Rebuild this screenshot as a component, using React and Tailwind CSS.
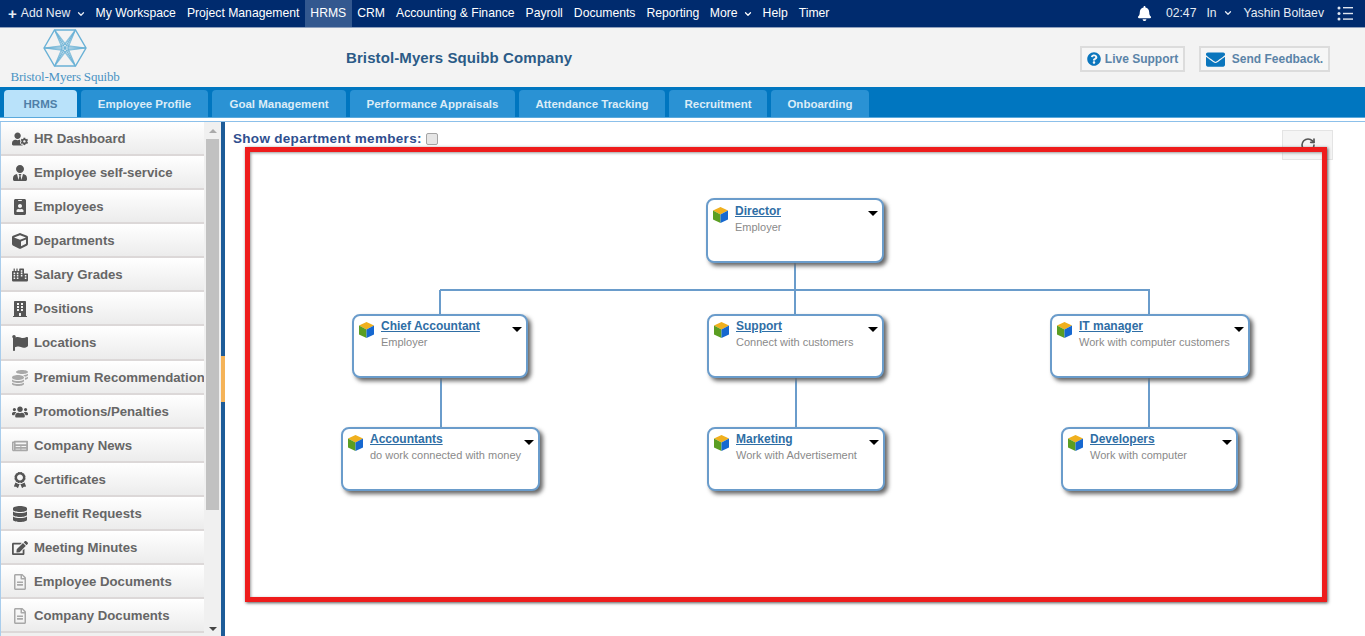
import { ChevronDown, RotateCw } from 'lucide-react';
import {
  FaUserCog, FaUserTie, FaIdBadge, FaCube, FaCity, FaBuilding, FaFlag, FaCoins, FaUsers,
  FaNewspaper, FaAward, FaDatabase, FaEdit, FaRegFileAlt, FaBell, FaQuestionCircle, FaEnvelope,
} from 'react-icons/fa';

const font = "font-['Liberation_Sans',Arial,sans-serif]";

const navItems = ['My Workspace', 'Project Management', 'HRMS', 'CRM', 'Accounting & Finance', 'Payroll', 'Documents', 'Reporting'];

const tabs = [
  { label: 'HRMS', cls: 'w-[73px]', active: true },
  { label: 'Employee Profile', cls: 'w-[127px]' },
  { label: 'Goal Management', cls: 'w-[134px]' },
  { label: 'Performance Appraisals', cls: 'w-[165px]' },
  { label: 'Attendance Tracking', cls: 'w-[146px]' },
  { label: 'Recruitment', cls: 'w-[98px]' },
  { label: 'Onboarding', cls: 'w-[98px]' },
];

const sideItems = [
  { label: 'HR Dashboard', icon: FaUserCog },
  { label: 'Employee self-service', icon: FaUserTie },
  { label: 'Employees', icon: FaIdBadge },
  { label: 'Departments', icon: FaCube },
  { label: 'Salary Grades', icon: FaCity },
  { label: 'Positions', icon: FaBuilding },
  { label: 'Locations', icon: FaFlag, tall: true },
  { label: 'Premium Recommendation', icon: FaCoins, light: true },
  { label: 'Promotions/Penalties', icon: FaUsers },
  { label: 'Company News', icon: FaNewspaper, light: true },
  { label: 'Certificates', icon: FaAward },
  { label: 'Benefit Requests', icon: FaDatabase },
  { label: 'Meeting Minutes', icon: FaEdit },
  { label: 'Employee Documents', icon: FaRegFileAlt, light: true },
  { label: 'Company Documents', icon: FaRegFileAlt, light: true },
];

const nodes = [
  { title: 'Director', sub: 'Employer', cls: 'left-[481px] top-[76px] w-[178px] h-[65px] pt-[4px]' },
  { title: 'Chief Accountant', sub: 'Employer', cls: 'left-[127px] top-[192px] w-[176px] h-[64px] pt-[3px]' },
  { title: 'Support', sub: 'Connect with customers', cls: 'left-[482px] top-[192px] w-[177px] h-[64px] pt-[3px]' },
  { title: 'IT manager', sub: 'Work with computer customers', cls: 'left-[825px] top-[192px] w-[200px] h-[64px] pt-[3px]' },
  { title: 'Accountants', sub: 'do work connected with money', cls: 'left-[116px] top-[305px] w-[199px] h-[64px] pt-[3px]' },
  { title: 'Marketing', sub: 'Work with Advertisement', cls: 'left-[482px] top-[305px] w-[178px] h-[64px] pt-[3px]' },
  { title: 'Developers', sub: 'Work with computer', cls: 'left-[836px] top-[305px] w-[177px] h-[64px] pt-[3px]' },
];

const lines = [
  'left-[215px] top-[167px] w-[710px] h-[2px]',
  'left-[569px] top-[141px] w-[2px] h-[51px]',
  'left-[214px] top-[168px] w-[2px] h-[24px]',
  'left-[923px] top-[168px] w-[2px] h-[24px]',
  'left-[215px] top-[256px] w-[2px] h-[49px]',
  'left-[570px] top-[256px] w-[2px] h-[49px]',
  'left-[923px] top-[256px] w-[2px] h-[49px]',
];

function Logo() {
  const spokes = [0, 60, 120, 180, 240, 300];
  return (
    <div className="w-[112px] flex flex-col items-center pt-[1px]">
      <svg width="44" height="38" viewBox="-22 -19 44 38" fill="none" stroke="#69b1d6" strokeWidth="1">
        <polygon points="-21,0 -10.5,-18 10.5,-18 21,0 10.5,18 -10.5,18" strokeWidth="1.4" />
        {spokes.map((a) => (
          <g key={a} transform={`rotate(${a})`}>
            <line x1="0" y1="0" x2="21" y2="0" />
            <path d="M0 -3 L10.5 -18 M0 3 L10.5 18 M3 0 L10.5 -18 M3 0 L10.5 18" opacity="0.75" />
          </g>
        ))}
      </svg>
      <span className="mt-[3px] font-['Liberation_Serif',serif] text-[13px] leading-[14px] text-[#4b93c4] whitespace-nowrap tracking-[-0.2px]">
        Bristol-Myers Squibb
      </span>
    </div>
  );
}

function Cube() {
  return (
    <svg width="17" height="18" viewBox="0 0 17 18" className="shrink-0">
      <path d="M8.5 1 L16 4.5 L8.5 8.5 L1 4.5 Z" fill="#f0b01e" />
      <path d="M1 4.5 L8.5 8.5 V17 L1 13.5 Z" fill="#5b9e22" />
      <path d="M16 4.5 L8.5 8.5 V17 L16 13.5 Z" fill="#1668d0" />
    </svg>
  );
}

function OrgNode({ title, sub, cls }) {
  return (
    <div className={`absolute ${cls} bg-white border-2 border-[#6a9ccb] rounded-[8px] shadow-[3px_3px_4px_#666] pl-[4px] flex gap-[6px]`}>
      <div className="pt-[2px]"><Cube /></div>
      <div className="min-w-0 flex-1">
        <div className="text-[12px] leading-[15px] font-bold text-[#2f6ea5] underline">{title}</div>
        <div className="text-[11px] leading-[17px] text-[#8a8a8a] whitespace-nowrap">{sub}</div>
      </div>
      <div className="absolute right-[4px] top-[11px] w-0 h-0 border-x-[5px] border-x-transparent border-t-[5px] border-t-black" />
    </div>
  );
}

export default function App() {
  return (
    <div className={`${font} h-[636px] w-[1365px] overflow-hidden bg-white flex flex-col`}>
      {/* top nav */}
      <div className="h-[28px] shrink-0 bg-[#002b6e] text-white text-[12.2px] flex items-center justify-between border-b border-[#8fa0bd]">
        <div className="flex items-stretch h-full">
          <div className="flex items-center pl-[8px] w-[90px] gap-[4px] text-[#e6ebf3]">
            <span className="text-[15px] font-bold leading-none">+</span>
            <span>Add New</span>
            <ChevronDown size={10} strokeWidth={3} className="ml-[2px]" />
          </div>
          {navItems.map((n) => (
            <div key={n} className={`flex items-center px-[5.5px] whitespace-nowrap ${n === 'HRMS' ? 'bg-[#33588f]' : ''}`}>{n}</div>
          ))}
          <div className="flex items-center px-[5px] gap-[5px]">
            <span>More</span>
            <ChevronDown size={10} strokeWidth={3} />
          </div>
          <div className="flex items-center px-[5px]">Help</div>
          <div className="flex items-center px-[6px]">Timer</div>
        </div>
        <div className="flex items-center pr-[12px] text-[#e6ebf3]">
          <FaBell size={15} className="text-white mr-[14px]" />
          <span className="mr-[10px]">02:47</span>
          <span className="mr-[6px]">In</span>
          <ChevronDown size={10} strokeWidth={3} className="mr-[11px]" />
          <span className="mr-[13px]">Yashin Boltaev</span>
          <svg width="16" height="15" viewBox="0 0 16 15" fill="#dfe6f0">
            <circle cx="2" cy="2" r="1.5" /><circle cx="2" cy="7.5" r="1.5" /><circle cx="2" cy="13" r="1.5" />
            <rect x="6" y="1" width="10" height="1.4" /><rect x="6" y="6.8" width="10" height="1.4" /><rect x="6" y="12.4" width="10" height="1.4" />
          </svg>
        </div>
      </div>

      {/* company header */}
      <div className="h-[59px] shrink-0 bg-[#f3f3f3] flex items-center">
        <div className="w-[346px] self-start pl-[9px]"><Logo /></div>
        <div className="text-[15px] font-bold text-[#2b5b87] tracking-[0.1px] mt-[2px]">Bristol-Myers Squibb Company</div>
        <div className="ml-auto flex items-center gap-[14px] pr-[35px] mt-[3px]">
          <div className="h-[26px] w-[105px] flex items-center justify-center gap-[4px] bg-[#f6f6f6] border-2 border-[#dcdcdc] text-[12px] font-bold text-[#5b84a8]">
            <FaQuestionCircle size={14} className="text-[#0b76bd]" />Live Support
          </div>
          <div className="h-[26px] w-[131px] flex items-center justify-center gap-[7px] bg-[#f6f6f6] border-2 border-[#dcdcdc] text-[12px] font-bold text-[#5b84a8]">
            <FaEnvelope size={19} className="text-[#0b76bd]" />Send Feedback.
          </div>
        </div>
      </div>

      {/* tabs */}
      <div className="h-[31px] shrink-0 bg-[#0076c0] flex items-end pl-[4px] gap-[4px] border-b border-[#5aa9dc]">
        {tabs.map((t) => (
          <div
            key={t.label}
            className={`${t.cls} h-[27px] pt-[2px] rounded-t-[4px] flex items-center justify-center text-[11.5px] font-bold whitespace-nowrap ${t.active ? 'bg-[#b9e2fa] text-[#4f7fa8]' : 'bg-[#2a92d4] text-[#dcecf7]'}`}
          >
            {t.label}
          </div>
        ))}
      </div>
      <div className="h-[4px] shrink-0 bg-white border-b border-[#8cc0ea]" />

      {/* body */}
      <div className="flex-1 min-h-0 flex">
        <div className="w-[221px] shrink-0 flex bg-[#f0f0f0] border-l border-[#a9cdec]">
          <div className="w-[203px] shrink-0 flex flex-col overflow-hidden">
            {sideItems.map(({ label, icon: Icon, light, tall }) => (
              <div key={label} className={`${tall ? 'h-[35px] pb-[1px]' : 'h-[34px]'} pt-[2px] shrink-0 flex items-center pl-[10px] gap-[6px] bg-gradient-to-b from-white to-[#ececec] border-b-2 border-[#dcd8d8]`}>
                <span className="w-[17px] flex justify-center shrink-0">
                  <Icon size={16} className={light ? 'text-[#a8a8a8]' : 'text-[#555]'} />
                </span>
                <span className="text-[13.2px] font-bold text-[#666] whitespace-nowrap">{label}</span>
              </div>
            ))}
          </div>
          <div className="w-[15px] ml-[2px] flex flex-col items-start">
            <div className="w-[13px] h-[17px] flex items-center justify-center"><div className="w-0 h-0 border-x-[4px] border-x-transparent border-b-[4px] border-b-[#aaa]" /></div>
            <div className="w-[13px] h-[371px] bg-[#c1c1c1]" />
            <div className="w-[13px] mt-auto h-[14px] flex items-center justify-center"><div className="w-0 h-0 border-x-[4px] border-x-transparent border-t-[4px] border-t-[#444]" /></div>
          </div>
        </div>
        <div className="w-[4px] shrink-0 flex flex-col bg-[#1d5c98]">
          <div className="h-[234px]" />
          <div className="h-[46px] bg-[#f5b358]" />
        </div>

        <div className="relative flex-1">
          <div className="flex items-center pl-[8px] pt-[7px] gap-[4px]">
            <span className="text-[13.5px] font-bold text-[#2f4f8f] tracking-[0.3px]">Show department members:</span>
            <span className="w-[12px] h-[12px] bg-[#e6e6e6] border border-[#a5a5a5] rounded-[2px]" />
          </div>

          <div className="absolute left-[1057px] top-[8px] w-[51px] h-[30px] bg-[#f5f5f5] border border-[#e4e4e4] flex justify-center pt-[6px]">
            <RotateCw size={16} strokeWidth={2.5} className="text-[#555]" />
          </div>

          {lines.map((l) => (
            <div key={l} className={`absolute ${l} bg-[#6a9ccb]`} />
          ))}
          {nodes.map((n) => (
            <OrgNode key={n.title} {...n} />
          ))}

          {/* red annotation frame */}
          <div className="absolute left-[20px] top-[25px] w-[1082px] h-[455px] border-[5px] border-[#ee1c1c] shadow-[1px_1px_3px_#555,inset_1px_1px_3px_#999] pointer-events-none" />
        </div>
      </div>
    </div>
  );
}
